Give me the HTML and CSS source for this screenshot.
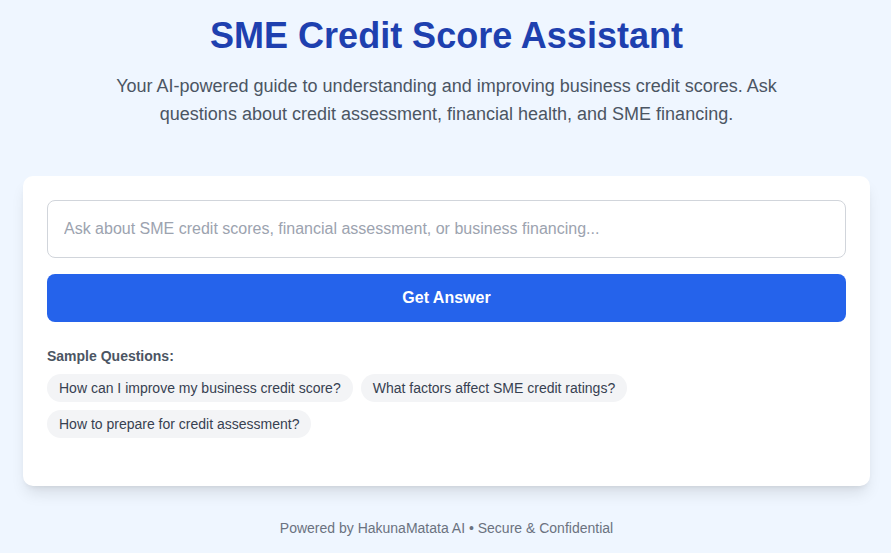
FILE: index.html
```html
<!DOCTYPE html>
<html lang="en">
<head>
<meta charset="utf-8">
<title>SME Credit Score Assistant</title>
<link rel="stylesheet" href="styles.css">
</head>
<body>
<main class="page">
  <header class="hero">
    <h1 class="title">SME Credit Score Assistant</h1>
    <p class="subtitle">Your AI-powered guide to understanding and improving business credit scores. Ask questions about credit assessment, financial health, and SME financing.</p>
  </header>
  <section class="card">
    <input class="ask-input" type="text" placeholder="Ask about SME credit scores, financial assessment, or business financing...">
    <button class="ask-button" type="button">Get Answer</button>
    <div class="samples">
      <p class="samples-label">Sample Questions:</p>
      <div class="chips">
        <button class="chip" type="button">How can I improve my business credit score?</button>
        <button class="chip" type="button">What factors affect SME credit ratings?</button>
        <button class="chip" type="button">How to prepare for credit assessment?</button>
      </div>
    </div>
  </section>
  <footer class="footer">Powered by HakunaMatata AI • Secure &amp; Confidential</footer>
</main>
</body>
</html>
```

FILE: styles.css
```css
* { box-sizing: border-box; }
html, body {
  margin: 0;
  padding: 0;
  background: #eff6ff;
  font-family: "Liberation Sans", Arial, sans-serif;
}
.page {
  padding: 16px 21px 0 23px;
  display: flex;
  flex-direction: column;
}
.hero {
  text-align: center;
  margin-bottom: 48px;
}
.title {
  margin: 0 0 16px;
  font-size: 36px;
  line-height: 40px;
  font-weight: 700;
  color: #1e40af;
}
.subtitle {
  margin: 0 auto;
  max-width: 672px;
  font-size: 18px;
  line-height: 28px;
  color: #4b5563;
}
.card {
  background: #ffffff;
  border-radius: 10px;
  box-shadow: 0 10px 15px -3px rgba(0,0,0,0.1), 0 4px 6px -4px rgba(0,0,0,0.1);
  padding: 24px 24px 48px;
  display: flex;
  flex-direction: column;
}
.ask-input {
  height: 58px;
  border: 1px solid #d1d5db;
  border-radius: 8px;
  padding: 0 16px;
  font-family: inherit;
  font-size: 16px;
  color: #111827;
  outline: none;
}
.ask-input::placeholder { color: #9ca3af; }
.ask-button {
  margin-top: 16px;
  height: 48px;
  border: 0;
  border-radius: 8px;
  background: #2563eb;
  color: #ffffff;
  font-family: inherit;
  font-size: 16px;
  font-weight: 700;
  cursor: pointer;
}
.samples { margin-top: 24px; }
.samples-label {
  margin: 0 0 8px;
  font-size: 14px;
  line-height: 20px;
  font-weight: 700;
  color: #4b5563;
}
.chips {
  display: flex;
  flex-wrap: wrap;
  gap: 8px;
}
.chip {
  height: 28px;
  padding: 0 12px;
  border: 0;
  border-radius: 9999px;
  background: #f3f4f6;
  color: #374151;
  font-family: inherit;
  font-size: 14px;
  cursor: pointer;
}
.footer {
  margin-top: 32px;
  text-align: center;
  font-size: 14px;
  line-height: 20px;
  color: #6b7280;
}
```
